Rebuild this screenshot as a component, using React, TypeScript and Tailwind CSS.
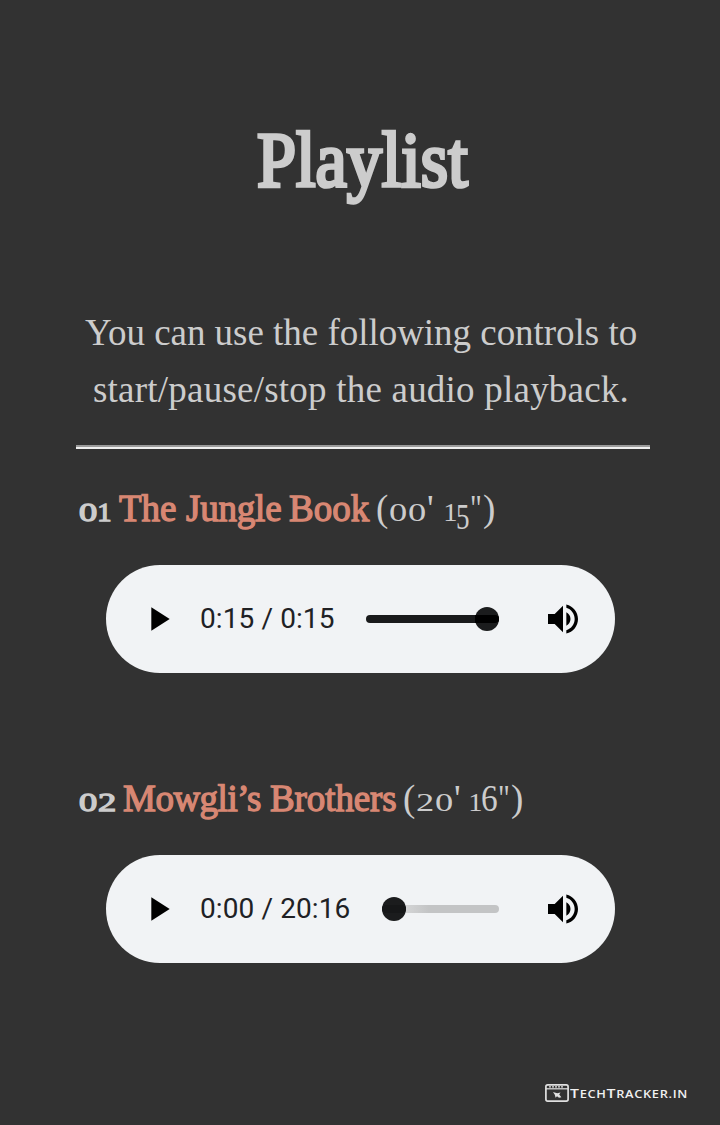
import type { ReactNode } from "react";

type Track = {
  number: ReactNode;
  title: ReactNode;
  length: ReactNode;
  time: string;
  ended: boolean;
};

function PlayIcon() {
  return (
    <svg viewBox="0 0 24 24" className="h-10 w-10 shrink-0 fill-black" aria-label="Play">
      <path d="M8 5v14l11-7z" />
    </svg>
  );
}

function VolumeIcon() {
  return (
    <svg viewBox="0 0 24 24" className="h-10 w-10 shrink-0 fill-black" aria-label="Volume">
      <path d="M3 9v6h4l5 5V4L7 9H3zm13.5 3c0-1.77-1.02-3.29-2.5-4.03v8.05c1.48-.73 2.5-2.25 2.5-4.02zM14 3.23v2.06c2.89.86 5 3.54 5 6.71s-2.11 5.85-5 6.71v2.06c4.01-.91 7-4.49 7-8.77s-2.99-7.86-7-8.77z" />
    </svg>
  );
}

/* Old-style figure of x-height, widened to the proportions of the lowercase. */
function Fig({ children, narrow = false }: { children: string; narrow?: boolean }) {
  return (
    <span className={narrow ? "inline-block w-[12px] text-[26px]" : "inline-block w-[19px] text-[26px]"}>
      <span className={narrow ? "inline-block origin-center scale-x-[1.1]" : "inline-block origin-left scale-x-[1.4]"}>{children}</span>
    </span>
  );
}

function Seconds() {
  return (
    <span className="inline-block w-[13px]">
      <span className="inline-block origin-left scale-x-[0.78]">"</span>
    </span>
  );
}

function Player({ time, ended }: { time: string; ended: boolean }) {
  return (
    <div className="ml-[30px] flex h-[108px] w-[509px] items-center rounded-full bg-[#f1f3f5] px-8">
      <PlayIcon />
      <span className="ml-[22px] font-['Roboto',sans-serif] text-[28px] leading-none tracking-[0.1px] whitespace-nowrap text-[#202124]">{time}</span>
      <div className={ended ? "relative ml-auto h-2 w-[133px] rounded-full bg-[#191a1b]" : "relative ml-auto h-2 w-[117px] rounded-full bg-linear-to-r from-[#d4d5d6] from-20% to-[#c3c4c5] to-40%"}>
        <div className="absolute -top-2 right-0 flex h-6 w-6 items-center rounded-full bg-[#1b1c1d] data-[start=true]:right-auto data-[start=true]:left-0" data-start={!ended}>
          <div className={ended ? "h-2 w-full rounded-r-full bg-black" : "h-2 w-full rounded-full bg-[#161718]"} />
        </div>
      </div>
      <div className="ml-11 flex">
        <VolumeIcon />
      </div>
    </div>
  );
}

const tracks: Track[] = [
  {
    number: (
      <span className="inline-block w-[40px]">
        <Fig>0</Fig>
        <Fig narrow>1</Fig>
      </span>
    ),
    title: (
      <>
        <span className="inline-block w-[67px]">The</span>
        <span className="inline-block w-[103px] tracking-[-0.2px]">Jungle</span>
        <span className="inline-block w-[87px]">Book</span>
      </>
    ),
    length: (
      <>
        <span className="inline-block w-[13px]">(</span>
        <Fig>0</Fig>
        <Fig>0</Fig>
        <span className="inline-block w-[17px]">'</span>
        <Fig narrow>1</Fig>
        <span className="relative top-[8px] inline-block w-[14px] text-[36px]"><span className="inline-block origin-left scale-x-75">5</span></span>
        <Seconds />
        <span className="inline-block w-[11px]">)</span>
      </>
    ),
    time: "0:15 / 0:15",
    ended: true,
  },
  {
    number: (
      <span className="inline-block w-[44px]">
        <Fig>0</Fig>
        <Fig>2</Fig>
      </span>
    ),
    title: (
      <>
        <span className="inline-block w-[147px] tracking-[-0.5px]">Mowgli’s</span>
        <span className="inline-block w-[133px] tracking-[-0.1px]">Brothers</span>
      </>
    ),
    length: (
      <>
        <span className="inline-block w-[13px]">(</span>
        <Fig>2</Fig>
        <Fig>0</Fig>
        <span className="inline-block w-[15px]">'</span>
        <Fig narrow>1</Fig>
        <span className="inline-block w-[17px]"><span className="inline-block origin-left scale-x-90">6</span></span>
        <Seconds />
        <span>)</span>
      </>
    ),
    time: "0:00 / 20:16",
    ended: false,
  },
];

export default function App() {
  return (
    <main className="flex h-[1125px] w-[720px] flex-col bg-[#323232] pr-[70px] pl-[76px] font-['Liberation_Serif',serif] text-[#cccccc]">
      <h1 className="mt-[113px] ml-[181px] h-[100px] w-[240px] origin-left scale-x-[0.9] text-[78px] leading-[93px] font-normal [-webkit-text-stroke:3.6px_#cccccc]">
        Playlist
      </h1>
      <div className="mt-[91px] h-[141px] text-[37px] leading-[57px] whitespace-nowrap">
        <p className="ml-[9px] tracking-[-0.03px]">You can use the following controls to</p>
        <p className="ml-[17px] tracking-[0.22px]">start/pause/stop the audio playback.</p>
      </div>
      <div className="h-1 shrink-0 border-t-2 border-b-2 border-t-[#9a9a9a] border-b-[#eeeeee]" />
      <div className="mt-8 flex flex-col gap-[98px]">
        {tracks.map((track) => (
          <section key={track.time} className="h-[192px]">
            <h2 className="flex h-[84px] items-baseline pl-[3px] text-[37px] leading-[56px] font-normal whitespace-nowrap">
              <span className="[-webkit-text-stroke:1.3px_#cccccc]">{track.number}</span>
              <span className="text-[#d88773] [-webkit-text-stroke:1.3px_#d88773]">{track.title}</span>
              <span>{track.length}</span>
            </h2>
            <Player time={track.time} ended={track.ended} />
          </section>
        ))}
      </div>
      <footer className="mt-[120px] ml-[469px] flex h-5 items-center gap-[1px]">
        <svg viewBox="0 0 24 18" className="h-[18px] w-6 shrink-0" fill="none" stroke="#e0e0e0" strokeWidth="1.7">
          <rect x="0.9" y="0.9" width="22.2" height="16.2" rx="1.8" />
          <path d="M1 4.8h22" strokeWidth="1.2" />
          <path d="M4 2.8h2M7 2.8h12" strokeWidth="1.2" strokeDasharray="2 1" />
          <path d="M8 8l4.2 1.2L15.5 8.4 14.2 10.6l2.2 2.6-2.4.6-2-1.6-1.4 1.6-.8-3z" fill="#e0e0e0" stroke="none" />
        </svg>
        <span className="origin-left scale-x-[1.22] font-['Open_Sans',sans-serif] text-[13px] leading-5 font-semibold tracking-[0.55px] whitespace-nowrap text-[#f0f0f0]">
          T<span className="text-[10.5px]">ECH</span>T<span className="text-[10.5px]">RACKER.IN</span>
        </span>
      </footer>
    </main>
  );
}
